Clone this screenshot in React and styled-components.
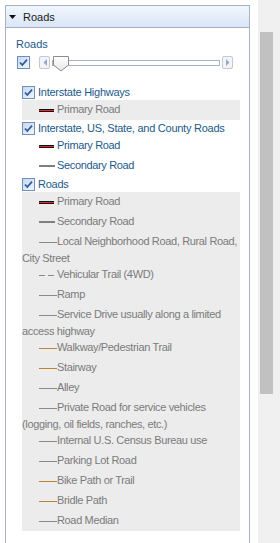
import React from "react";
import styled, { createGlobalStyle } from "styled-components";

const GlobalStyle = createGlobalStyle`
  html, body {
    margin: 0;
    padding: 0;
    background: #fff;
    overflow: hidden;
  }
  body {
    font-family: "Liberation Sans", Arial, sans-serif;
  }
`;

const Page = styled.div`
  display: flex;
  width: 280px;
  height: 543px;
`;

const Panel = styled.div`
  box-sizing: border-box;
  width: 245px;
  height: 538px;
  margin: 5px 0 0 5px;
  border: 1px solid #a9b2c5;
  border-bottom: 0;
`;

const Header = styled.div`
  height: 21px;
  border-bottom: 1px solid #a9b2c5;
  background: linear-gradient(#f1f6fd, #d9e6f7);
  display: flex;
  align-items: center;
  gap: 7px;
  padding-left: 3px;
  font-size: 11px;
  color: #1a1a1a;
`;

const Body = styled.div`
  padding: 10px 9px 0 10px;
`;

const GroupLabel = styled.div`
  font-size: 11px;
  line-height: 13px;
  color: #1b5a8c;
`;

const SliderRow = styled.div`
  display: flex;
  align-items: center;
  height: 15px;
  margin: 4px 7px 0 1px;
`;

const StepButton = styled.div`
  box-sizing: border-box;
  width: 11px;
  height: 13px;
  border: 1px solid #c3c8d2;
  border-radius: 2px;
  background: #f3f4f6;
  display: flex;
  align-items: center;
  justify-content: center;
  margin-left: ${(p) => p.$gap || 0}px;
`;

const Track = styled.div`
  position: relative;
  flex: 1;
  height: 6px;
  margin: 0 2px;
  box-sizing: border-box;
  border: 1px solid #a9b1c4;
  background: #fff;
`;

const Thumb = styled.svg`
  position: absolute;
  left: 0;
  top: -5px;
`;

const LayerList = styled.div`
  margin-top: 14px;
`;

const LayerRow = styled.div`
  display: flex;
  align-items: center;
  gap: 3px;
  height: 16px;
  margin-left: 6px;
  font-size: 11px;
  letter-spacing: -0.25px;
  color: #1b5a8c;
`;

const LegendBox = styled.div`
  margin-left: 6px;
  background: ${(p) => (p.$plain ? "transparent" : "#ececec")};
`;

const Item = styled.div`
  font-size: 11px;
  line-height: 13px;
  letter-spacing: -0.35px;
  color: ${(p) => p.$color};
`;

const Icon = styled.span`
  display: inline-flex;
  align-items: center;
  vertical-align: middle;
  width: 18px;
  height: 20px;
  margin-left: 17px;
`;

const lineStyles = {
  primary: `
    width: 15px;
    height: 1px;
    background: #e8262d;
    border-top: 1px solid #111;
    border-bottom: 1px solid #111;
  `,
  secondary: `
    width: 16px;
    height: 2px;
    background: #7f7f7f;
  `,
  minor: `
    width: 18px;
    height: 1px;
    background: #8a8a8a;
  `,
  trail: `
    width: 15px;
    height: 1px;
    background: repeating-linear-gradient(90deg, #8a8a8a 0 6px, transparent 6px 9px);
  `,
  path: `
    width: 18px;
    height: 1px;
    background: #b8862e;
  `,
};

const Line = styled.span`
  display: block;
  ${(p) => lineStyles[p.$kind]}
`;

const ScrollTrack = styled.div`
  box-sizing: border-box;
  width: 22px;
  margin-left: 8px;
  padding-top: 32px;
  background: #f0f0f0;
`;

const ScrollThumb = styled.div`
  width: 13px;
  height: 362px;
  margin-left: 2px;
  background: #c1c1c1;
`;

const CheckBox = () => (
  <svg width="13" height="13" viewBox="0 0 13 13">
    <defs>
      <linearGradient id="cbfill" x1="0" y1="0" x2="1" y2="1">
        <stop offset="0" stopColor="#c6d6ee" />
        <stop offset="1" stopColor="#f4f7fc" />
      </linearGradient>
    </defs>
    <rect x="0.5" y="0.5" width="12" height="12" fill="url(#cbfill)" stroke="#6f8fbd" />
    <path d="M3 6.5 L5.3 9 L10 3.6" fill="none" stroke="#2a5d9f" strokeWidth="1.8" />
  </svg>
);

const Arrow = ({ dir }) => (
  <svg width="4" height="7" viewBox="0 0 4 7">
    <polygon points={dir === "left" ? "4,0 4,7 0.5,3.5" : "0,0 0,7 3.5,3.5"} fill="#93a8cc" />
  </svg>
);

const LegendEntry = ({ kind, label, color }) => (
  <Item $color={color}>
    <Icon>
      <Line $kind={kind} />
    </Icon>
    {label}
  </Item>
);

const GREY = "#7b7b7b";
const BLUE = "#1b5a8c";

const roadItems = [
  { kind: "primary", label: "Primary Road" },
  { kind: "secondary", label: "Secondary Road" },
  { kind: "minor", label: "Local Neighborhood Road, Rural Road, City Street" },
  { kind: "trail", label: "Vehicular Trail (4WD)" },
  { kind: "minor", label: "Ramp" },
  { kind: "minor", label: "Service Drive usually along a limited access highway" },
  { kind: "path", label: "Walkway/Pedestrian Trail" },
  { kind: "path", label: "Stairway" },
  { kind: "minor", label: "Alley" },
  { kind: "minor", label: "Private Road for service vehicles (logging, oil fields, ranches, etc.)" },
  { kind: "minor", label: "Internal U.S. Census Bureau use" },
  { kind: "minor", label: "Parking Lot Road" },
  { kind: "path", label: "Bike Path or Trail" },
  { kind: "path", label: "Bridle Path" },
  { kind: "minor", label: "Road Median" },
];

const App = () => {
  return (
    <Page>
      <GlobalStyle />
      <Panel>
        <Header>
          <svg width="7" height="4" viewBox="0 0 7 4">
            <polygon points="0,0 7,0 3.5,4" fill="#111" />
          </svg>
          Roads
        </Header>
        <Body>
          <GroupLabel>Roads</GroupLabel>
          <SliderRow>
            <CheckBox />
            <StepButton $gap={9}>
              <Arrow dir="left" />
            </StepButton>
            <Track>
              <Thumb width="16" height="16" viewBox="0 0 16 16">
                <defs>
                  <linearGradient id="thumbfill" x1="0" y1="0" x2="0" y2="1">
                    <stop offset="0" stopColor="#ffffff" />
                    <stop offset="1" stopColor="#e6e6e6" />
                  </linearGradient>
                </defs>
                <polygon
                  points="0.5,0.5 15.5,0.5 15.5,9 8,15 0.5,9"
                  fill="url(#thumbfill)"
                  stroke="#8c8c8c"
                />
              </Thumb>
            </Track>
            <StepButton>
              <Arrow dir="right" />
            </StepButton>
          </SliderRow>

          <LayerList>
            <LayerRow>
              <CheckBox />
              Interstate Highways
            </LayerRow>
            <LegendBox>
              <LegendEntry kind="primary" label="Primary Road" color={GREY} />
            </LegendBox>

            <LayerRow>
              <CheckBox />
              Interstate, US, State, and County Roads
            </LayerRow>
            <LegendBox $plain>
              <LegendEntry kind="primary" label="Primary Road" color={BLUE} />
              <LegendEntry kind="secondary" label="Secondary Road" color={BLUE} />
            </LegendBox>

            <LayerRow>
              <CheckBox />
              Roads
            </LayerRow>
            <LegendBox>
              {roadItems.map((it) => (
                <LegendEntry key={it.label} kind={it.kind} label={it.label} color={GREY} />
              ))}
            </LegendBox>
          </LayerList>
        </Body>
      </Panel>
      <ScrollTrack>
        <ScrollThumb />
      </ScrollTrack>
    </Page>
  );
};

export default App;
